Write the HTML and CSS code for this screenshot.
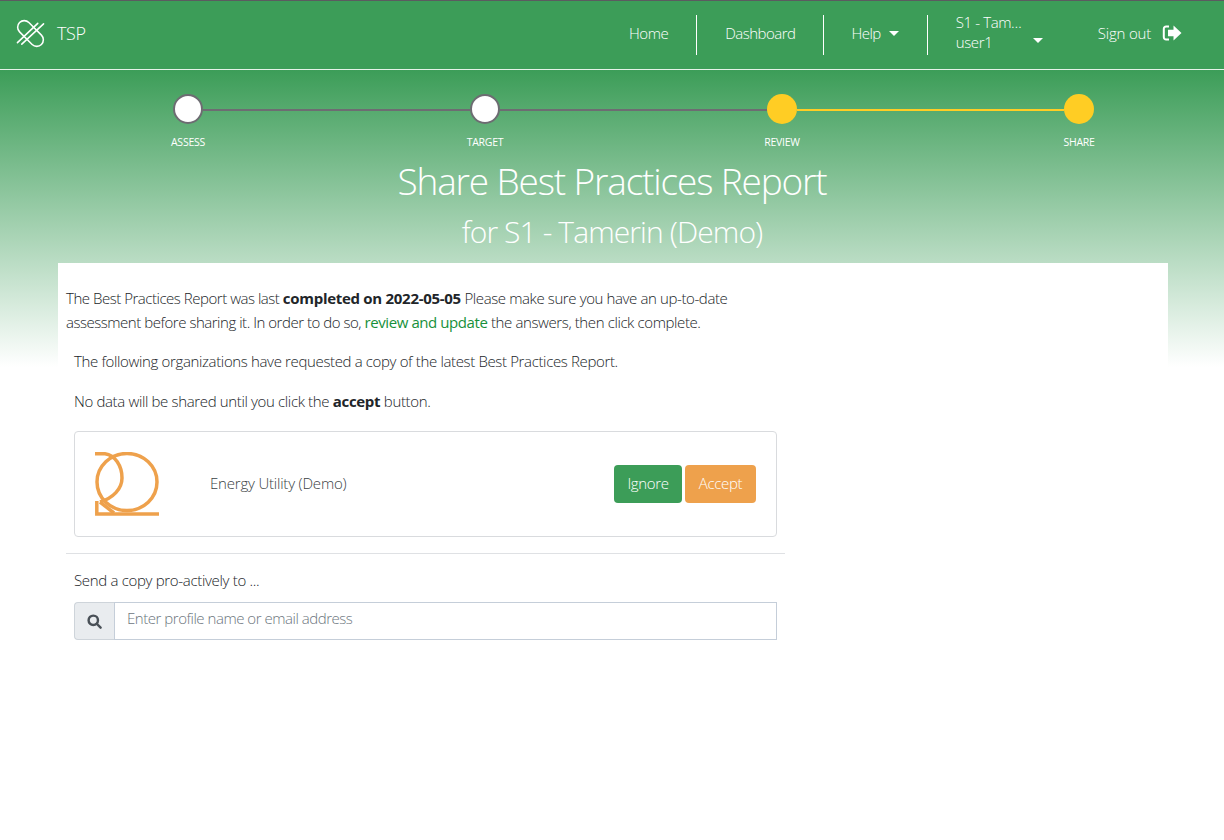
FILE: index.html
```html
<!DOCTYPE html>
<html lang="en">
<head>
<meta charset="utf-8">
<title>TSP - Share Best Practices Report</title>
<link rel="stylesheet" href="styles.css">
</head>
<body>
<header class="navbar">
  <a class="brand">
    <svg class="brand-logo" viewBox="0 0 30 30" fill="none" stroke="#fff" stroke-width="1.600" stroke-linecap="round">
      <rect x="-1" y="8.200" width="32" height="13.600" rx="6.800" transform="rotate(45 15 15)"/>
      <path d="M1.500 24.500 L22.500 4.500"/>
      <path d="M6 26 L28.500 5"/>
    </svg>
    <span>TSP</span>
  </a>
  <nav class="nav">
    <a class="nav-item nav-home">Home</a>
    <a class="nav-item">Dashboard</a>
    <a class="nav-item nav-help">Help <i class="caret"></i></a>
    <a class="nav-item nav-user">
      <span class="user-lines"><span>S1 - Tam…</span><span>user1</span></span>
      <i class="caret"></i>
    </a>
    <a class="nav-signout">Sign out
      <svg class="signout-icon" viewBox="0 0 20 18" fill="#fff">
        <path d="M7 1.500H4.200C2.100 1.500.8 3 .8 5v8c0 2 1.300 3.500 3.400 3.500H7v-2H4.400C3.400 14.500 2.800 14 2.800 13V5c0-1 .6-1.500 1.600-1.500H7z"/>
        <path d="M11.500 1.500 19.500 9l-8 7.500V12.200H6V5.800h5.500z"/>
      </svg>
    </a>
  </nav>
</header>

<section class="hero">
  <ol class="stepper">
    <li class="step done"><span class="dot"></span><span class="step-label">ASSESS</span></li>
    <li class="step done"><span class="dot"></span><span class="step-label">TARGET</span></li>
    <li class="step current"><span class="dot"></span><span class="step-label">REVIEW</span></li>
    <li class="step current last"><span class="dot"></span><span class="step-label">SHARE</span></li>
  </ol>
  <h1>Share Best Practices Report</h1>
  <h2>for S1 - Tamerin (Demo)</h2>
</section>

<main class="sheet">
  <div class="column">
    <p class="intro"><span class="tight">The Best Practices Report was last </span><b>completed on 2022-05-05</b> Please make sure you have an up-to-date <span class="tight">assessment before sharing it. In order to do so, </span><a class="link">review and update</a> the answers, then click complete.</p>
    <div class="inset">
      <p>The following organizations have requested a copy of the latest Best Practices Report.</p>
      <p>No data will be shared until you click the <b>accept</b> button.</p>
      <div class="request">
        <svg class="org-logo" viewBox="0 0 64 64" fill="none" stroke="#eea14c" stroke-width="3.500">
          <ellipse cx="32" cy="30" rx="30" ry="28.500"/>
          <path d="M0 1.800H10C20 3 27 14 27 26C27 37 18 46 5 50"/>
          <path d="M1.800 49V62H64"/>
          <path d="M5 50L19 61"/>
        </svg>
        <span class="org-name">Energy Utility (Demo)</span>
        <button class="btn btn-green">Ignore</button>
        <button class="btn btn-orange">Accept</button>
      </div>
    </div>
    <hr class="rule">
    <div class="inset">
      <label class="send-label" for="who">Send a copy pro-actively to ...</label>
      <div class="search">
        <span class="search-addon">
          <svg viewBox="0 0 16 16" fill="none" stroke="#495057" stroke-width="2.600"><circle cx="6.700" cy="6.700" r="5"/><path d="M10.400 10.400 14.500 14.500" stroke-linecap="round"/></svg>
        </span>
        <input id="who" class="search-input" placeholder="Enter profile name or email address">
      </div>
    </div>
  </div>
</main>
</body>
</html>
```
FILE: styles.css
```css
* { box-sizing: border-box; }
html, body { margin: 0; padding: 0; }
body {
  min-height: 840px;
  font-family: "Open Sans", "Liberation Sans", sans-serif;
  font-weight: 300;
  font-size: 15px;
  letter-spacing: -0.39px;
  line-height: 24px;
  color: #212529;
  background: #fff linear-gradient(to bottom, #3c9d58 0, #3c9d58 70px, #fff 367px) no-repeat;
  overflow-x: hidden;
}
.navbar {
  height: 70px;
  display: flex;
  align-items: center;
  justify-content: space-between;
  background: #3c9d58;
  border-top: 1px solid #5b5b60;
  border-bottom: 1px solid #e6f2e9;
  padding: 0 42px 0 16px;
  color: #fff;
}
.brand { display: flex; align-items: center; gap: 12px; font-size: 18px; margin-top: -4px; }
.brand-logo { width: 29px; height: 29px; }
.nav { display: flex; align-items: center; }
.nav-item {
  height: 40px;
  display: flex;
  align-items: center;
  gap: 8px;
  padding: 0 28px 4px;
  border-right: 1px solid #fff;
  letter-spacing: -0.5px;
}
.nav-home { padding-right: 28px; }
.nav-help { padding-left: 27px; }
.nav-user { border-right: 0; padding-right: 0; letter-spacing: -0.39px; }
.nav-user .caret { margin-top: 14px; }
.user-lines { display: flex; flex-direction: column; line-height: 20px; width: 69px; white-space: nowrap; margin-top: -2px; }
.caret {
  display: inline-block;
  width: 0; height: 0;
  border-left: 5px solid transparent;
  border-right: 5px solid transparent;
  border-top: 5px solid #fff;
}
.nav-signout { display: flex; align-items: center; gap: 11px; margin-left: 55px; padding-bottom: 4px; letter-spacing: -0.2px; }
.signout-icon { width: 20px; height: 18px; }

.hero { height: 193px; color: #fff; text-align: center; }
.stepper {
  list-style: none;
  display: flex;
  gap: 237px;
  margin: 0 0 0 158px;
  padding: 24px 0 0;
}
.step {
  width: 60px;
  display: flex;
  flex-direction: column;
  align-items: center;
  position: relative;
}
.step::after {
  content: "";
  position: absolute;
  left: 45px;
  top: 15px;
  width: 267px;
  height: 2px;
  background: #6d6c72;
}
.step.current::after { background: #ffcd24; }
.step.last::after { display: none; }
.dot {
  width: 30px;
  height: 30px;
  border-radius: 50%;
  background: #fff;
  border: 2px solid #6d6c72;
}
.current .dot { background: #ffcd24; border: 0; }
.step-label { font-size: 10.500px; line-height: 14px; margin-top: 11px; letter-spacing: -0.25px; font-weight: 400; white-space: nowrap; }
h1 { margin: 8px 0 0; font-size: 37px; line-height: 48px; font-weight: 300; letter-spacing: -1.15px; }
h2 { margin: 7px 0 0; font-size: 30px; line-height: 40px; font-weight: 300; letter-spacing: -0.9px; }

.sheet {
  width: 1110px;
  min-height: 400px;
  margin-left: 58px;
  background: #fff;
  padding: 23px 8px 0;
}
.column { width: 719px; }
p { margin: 0 0 16px; }
.intro { width: 680px; margin-bottom: 15px; letter-spacing: -0.39px; }
.tight { letter-spacing: -0.47px; }
b { font-weight: 700; letter-spacing: -0.29px; }
.link { color: #17903a; font-weight: 400; letter-spacing: -0.42px; }
.inset { padding: 0 8px; letter-spacing: -0.355px; }
.request {
  display: flex;
  align-items: center;
  height: 106px;
  margin-top: 18px;
  padding: 0 20px;
  border: 1px solid #d9dbde;
  border-radius: 4px;
}
.org-logo { width: 64px; height: 64px; flex: none; }
.org-name { margin-left: 51px; flex: 1; margin-bottom: 3px; color: #3a3f44; letter-spacing: -0.2px; }
.btn {
  height: 38px;
  border: 0;
  border-radius: 4px;
  color: #fff;
  font: inherit;
  letter-spacing: inherit;
  padding: 0 0 2px;
}
.btn-green { background: #3c9d58; width: 68px; }
.btn-orange { background: #eea14c; width: 71px; margin-left: 3px; }
.rule { margin: 16px 0 14px; border: 0; border-top: 1px solid #dfe1e4; }
.send-label { display: block; margin-bottom: 10px; letter-spacing: -0.32px; }
.search { display: flex; height: 38px; }
.search-addon {
  width: 40px;
  display: flex;
  align-items: center;
  justify-content: center;
  background: #e9ecef;
  border: 1px solid #ced4da;
  border-right: 0;
  border-radius: 4px 0 0 4px;
}
.search-addon svg { width: 15px; height: 15px; }
.search-input {
  flex: 1;
  min-width: 0;
  height: 38px;
  padding: 0 12px 6px;
  border: 1px solid #c5ced9;
  border-radius: 0;
  font: inherit;
  letter-spacing: -0.47px;
  color: #495057;
  background: #fff;
  outline: 0;
}
.search-input::placeholder { color: #6c757d; opacity: 1; }
```
